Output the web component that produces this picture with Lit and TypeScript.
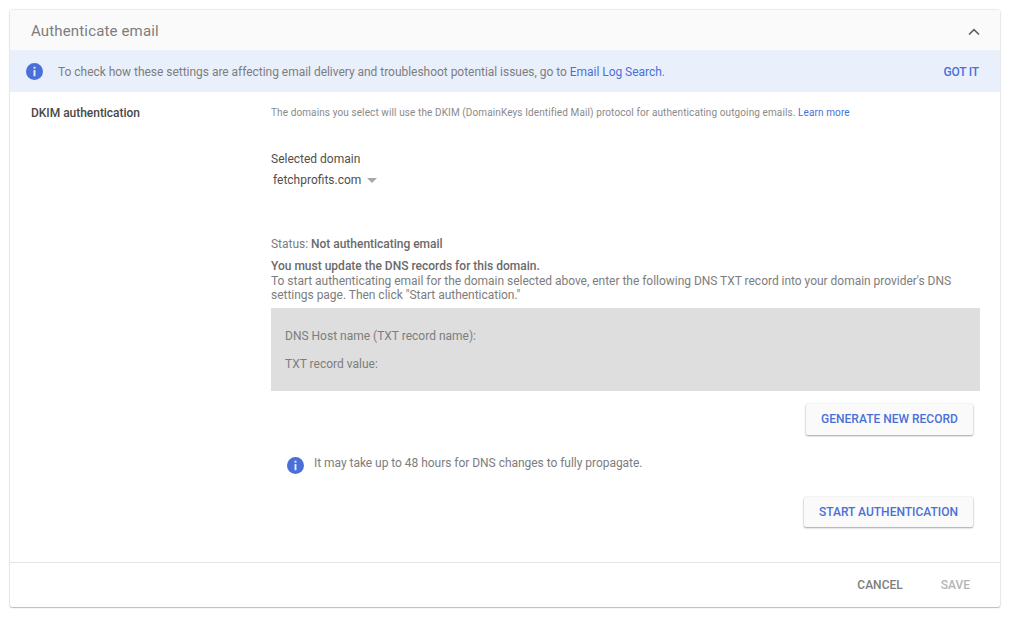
import { LitElement, html, css } from "lit";
import { customElement } from "lit/decorators.js";

const info = (size: number) => html`<svg class="info" width=${size} height=${size} viewBox="0 0 18 18">
  <circle cx="9" cy="9" r="9" fill="#4a6fd8"></circle>
  <rect x="8" y="4" width="2" height="2" fill="#e8eefb"></rect>
  <rect x="8" y="7.5" width="2" height="6.5" fill="#e8eefb"></rect>
</svg>`;

@customElement("app-root")
export class AppRoot extends LitElement {
  static styles = css`
    :host {
      display: block;
      width: 1024px;
      height: 631px;
      box-sizing: border-box;
      padding: 10px 24px 0 10px;
      background: #fff;
      font-family: Roboto, "Liberation Sans", sans-serif;
      color: #7d7d7d;
      overflow: hidden;
    }
    .card {
      height: 597px;
      box-sizing: border-box;
      border-radius: 2px;
      background: #fff;
      box-shadow: 0 0 2px rgba(0, 0, 0, 0.28), 0 1px 1px rgba(0, 0, 0, 0.2);
      display: flex;
      flex-direction: column;
    }
    .head {
      height: 40px;
      flex: none;
      box-sizing: border-box;
      padding: 2px 20px 0 21px;
      background: #fafafa;
      display: flex;
      align-items: center;
      justify-content: space-between;
      font-size: 15px;
      color: #7d7d7d;
      letter-spacing: 0.15px;
    }
    .head svg { margin-top: 2px; }
    .banner {
      height: 42px;
      flex: none;
      box-sizing: border-box;
      padding: 1px 21px 0 16px;
      background: #e9f0fc;
      display: flex;
      align-items: center;
      font-size: 12px;
      color: #7d7d7d;
    }
    .banner .info { margin: -1px 15px 0 0; flex: none; }
    .banner .msg { flex: 1; letter-spacing: -0.03px; }
    a { color: #4a70d8; text-decoration: none; }
    .action {
      color: #4a70d8;
      font-weight: 500;
      font-size: 12px;
      letter-spacing: -0.2px;
    }
    .body {
      flex: 1;
      display: grid;
      grid-template-columns: 261px 709px;
      box-sizing: border-box;
      padding-top: 13px;
    }
    .label {
      padding-left: 21px;
      font-size: 12px;
      font-weight: 500;
      color: #484848;
      line-height: 16px;
      letter-spacing: -0.03px;
    }
    .main { display: flex; flex-direction: column; }
    .desc { padding-top: 1px; font-size: 10px; line-height: 14px; letter-spacing: 0.105px; color: #8a8a8a; }
    .sel-label { margin-top: 31px; font-size: 12px; line-height: 16px; color: #4f4f4f; }
    .sel { margin-top: 5px; padding-left: 2px; display: flex; align-items: center; font-size: 12px; line-height: 16px; color: #4f4f4f; }
    .caret { margin-left: 6px; width: 0; height: 0; border-left: 5px solid transparent; border-right: 5px solid transparent; border-top: 5px solid #a8a8a8; }
    .status { margin-top: 49px; font-size: 12px; line-height: 14px; letter-spacing: -0.02px; }
    b { font-weight: 500; color: #6a6a6a; }
    .must { margin-top: 8px; font-size: 12px; line-height: 14.5px; letter-spacing: -0.025px; }
    .must b { letter-spacing: 0; }
    .record {
      margin-top: 5px;
      height: 83px;
      box-sizing: border-box;
      background: #dedede;
      padding: 20px 14px;
      font-size: 12px;
      line-height: 16px;
      color: #7d7d7d;
      display: flex;
      flex-direction: column;
      gap: 12px;
    }
    .btn-row { display: flex; justify-content: flex-end; padding-right: 7px; }
    .btn {
      box-sizing: border-box;
      height: 31px;
      display: flex;
      align-items: center;
      justify-content: center;
      border-radius: 2px;
      background: #fafafa;
      box-shadow: 0 1px 2px rgba(0, 0, 0, 0.35), 0 0 2px rgba(0, 0, 0, 0.12);
      color: #4a70d8;
      font-weight: 500;
      font-size: 12px;
    }
    .gen { margin-top: 13px; width: 167px; }
    .start { width: 169px; height: 30px; }
    .note {
      margin-top: 20px;
      height: 42px;
      padding-left: 16px;
      display: flex;
      align-items: flex-start;
      font-size: 12px;
      line-height: 16px;
      letter-spacing: -0.035px;
    }
    .note .info { margin: 2px 10px 0 0; flex: none; }
    .foot {
      height: 45px;
      flex: none;
      box-sizing: border-box;
      border-top: 1px solid #e4e4e4;
      padding-right: 30px;
      display: flex;
      align-items: center;
      justify-content: flex-end;
      gap: 38px;
      font-size: 12px;
      font-weight: 500;
    }
    .cancel { color: #7d7d7d; }
    .save { color: #b4b4b4; }
  `;

  render() {
    return html`<div class="card">
      <div class="head">
        <span>Authenticate email</span>
        <svg width="12" height="8" viewBox="0 0 12 8">
          <path d="M1 6.5 L6 1.7 L11 6.5" fill="none" stroke="#616161" stroke-width="1.7"></path>
        </svg>
      </div>
      <div class="banner">
        ${info(17)}
        <span class="msg">To check how these settings are affecting email delivery and troubleshoot potential issues, go to <a>Email Log Search</a>.</span>
        <span class="action">GOT IT</span>
      </div>
      <div class="body">
        <div class="label">DKIM authentication</div>
        <div class="main">
          <div class="desc">The domains you select will use the DKIM (DomainKeys Identified Mail) protocol for authenticating outgoing emails. <a>Learn more</a></div>
          <div class="sel-label">Selected domain</div>
          <div class="sel">fetchprofits.com<span class="caret"></span></div>
          <div class="status">Status: <b>Not authenticating email</b></div>
          <div class="must"><b>You must update the DNS records for this domain.</b><br />To start authenticating email for the domain selected above, enter the following DNS TXT record into your domain provider's DNS settings page. Then click "Start authentication."</div>
          <div class="record">
            <div>DNS Host name (TXT record name):</div>
            <div>TXT record value:</div>
          </div>
          <div class="btn-row"><div class="btn gen">GENERATE NEW RECORD</div></div>
          <div class="note">${info(17)}<span>It may take up to 48 hours for DNS changes to fully propagate.</span></div>
          <div class="btn-row"><div class="btn start">START AUTHENTICATION</div></div>
        </div>
      </div>
      <div class="foot">
        <span class="cancel">CANCEL</span>
        <span class="save">SAVE</span>
      </div>
    </div>`;
  }
}
